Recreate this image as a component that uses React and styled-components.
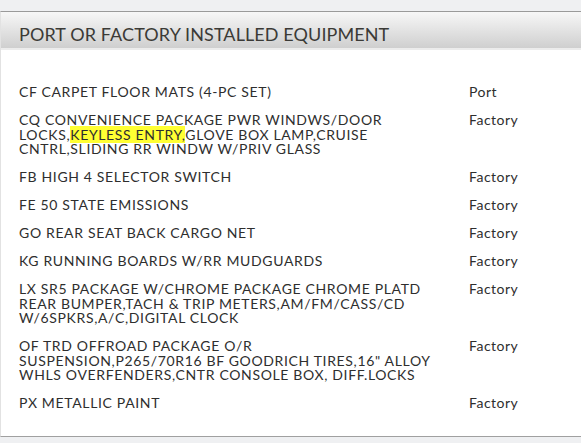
import React from "react";
import styled, { createGlobalStyle } from "styled-components";

const Global = createGlobalStyle`
  html, body { margin: 0; padding: 0; background: #eff0f2; }
  body { font-family: Lato, "Open Sans", sans-serif; }
`;

const Page = styled.div`
  padding-top: 11px;
  width: 581px;
  height: 443px;
  box-sizing: border-box;
`;

const Panel = styled.section`
  background: #ffffff;
  border-top: 1px solid #9a9a9a;
  border-bottom: 1px solid #a0a0a0;
  border-left: 1px solid #e2e2e2;
`;

const Header = styled.h2`
  margin: 0;
  height: 38px;
  box-sizing: border-box;
  display: flex;
  align-items: center;
  padding: 7px 0 0 18px;
  background: linear-gradient(#f7f7f7, #cfcfcf);
  border-bottom: 2px solid #ececec;
  font-family: Lato, sans-serif;
  font-weight: 400;
  font-size: 18px;
  color: #3b3a36;
  letter-spacing: 0.1px;
`;

const List = styled.div`
  display: flex;
  flex-direction: column;
  gap: 13.5px;
  padding: 35px 0 25px 18px;
`;

const Row = styled.div`
  display: grid;
  grid-template-columns: 420px 1fr;
  column-gap: 30px;
  font-family: Lato, sans-serif;
  font-size: 14px;
  line-height: 14.5px;
  letter-spacing: 0.65px;
  color: #2e2e2e;
`;

const Desc = styled.div``;

const Source = styled.div`
  letter-spacing: 0.5px;
`;

const Mark = styled.span`
  background: #ffff33;
`;

const items = [
  { d: "CF CARPET FLOOR MATS (4-PC SET)", s: "Port" },
  {
    d: (
      <>
        CQ CONVENIENCE PACKAGE PWR WINDWS/DOOR LOCKS,<Mark>KEYLESS ENTRY,</Mark>GLOVE BOX LAMP,CRUISE CNTRL,SLIDING RR WINDW W/PRIV GLASS
      </>
    ),
    s: "Factory",
  },
  { d: "FB HIGH 4 SELECTOR SWITCH", s: "Factory" },
  { d: "FE 50 STATE EMISSIONS", s: "Factory" },
  { d: "GO REAR SEAT BACK CARGO NET", s: "Factory" },
  { d: "KG RUNNING BOARDS W/RR MUDGUARDS", s: "Factory" },
  {
    d: "LX SR5 PACKAGE W/CHROME PACKAGE CHROME PLATD REAR BUMPER,TACH & TRIP METERS,AM/FM/CASS/CD W/6SPKRS,A/C,DIGITAL CLOCK",
    s: "Factory",
  },
  {
    d: 'OF TRD OFFROAD PACKAGE O/R SUSPENSION,P265/70R16 BF GOODRICH TIRES,16" ALLOY WHLS OVERFENDERS,CNTR CONSOLE BOX, DIFF.LOCKS',
    s: "Factory",
  },
  { d: "PX METALLIC PAINT", s: "Factory" },
];

export default function App() {
  return (
    <Page>
      <Global />
      <Panel>
        <Header>PORT OR FACTORY INSTALLED EQUIPMENT</Header>
        <List>
          {items.map((it, i) => (
            <Row key={i}>
              <Desc>{it.d}</Desc>
              <Source>{it.s}</Source>
            </Row>
          ))}
        </List>
      </Panel>
    </Page>
  );
}
